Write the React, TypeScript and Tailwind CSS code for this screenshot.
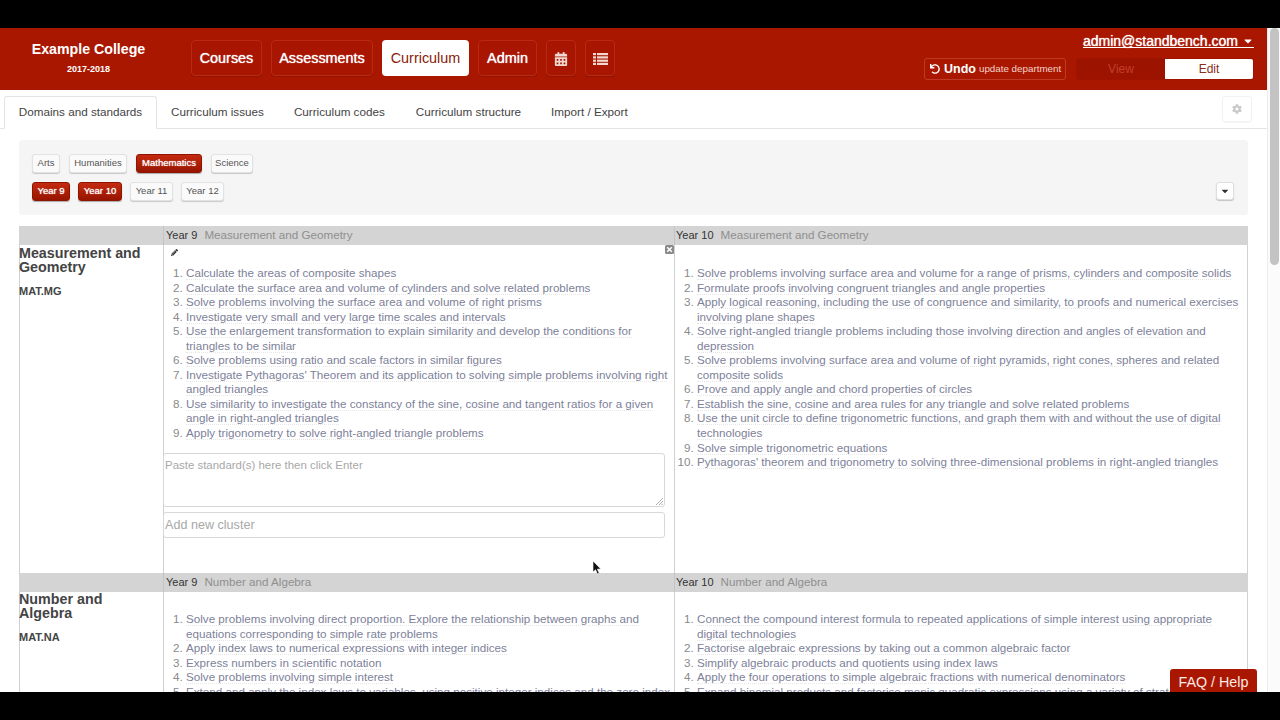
import React from "react";
import { FaCalendarAlt, FaCog, FaUndo, FaPencilAlt, FaCaretDown } from "react-icons/fa";

const y9mg = [
  "Calculate the areas of composite shapes",
  "Calculate the surface area and volume of cylinders and solve related problems",
  "Solve problems involving the surface area and volume of right prisms",
  "Investigate very small and very large time scales and intervals",
  "Use the enlargement transformation to explain similarity and develop the conditions for triangles to be similar",
  "Solve problems using ratio and scale factors in similar figures",
  "Investigate Pythagoras' Theorem and its application to solving simple problems involving right angled triangles",
  "Use similarity to investigate the constancy of the sine, cosine and tangent ratios for a given angle in right-angled triangles",
  "Apply trigonometry to solve right-angled triangle problems",
];
const y10mg = [
  "Solve problems involving surface area and volume for a range of prisms, cylinders and composite solids",
  "Formulate proofs involving congruent triangles and angle properties",
  "Apply logical reasoning, including the use of congruence and similarity, to proofs and numerical exercises involving plane shapes",
  "Solve right-angled triangle problems including those involving direction and angles of elevation and depression",
  "Solve problems involving surface area and volume of right pyramids, right cones, spheres and related composite solids",
  "Prove and apply angle and chord properties of circles",
  "Establish the sine, cosine and area rules for any triangle and solve related problems",
  "Use the unit circle to define trigonometric functions, and graph them with and without the use of digital technologies",
  "Solve simple trigonometric equations",
  "Pythagoras' theorem and trigonometry to solving three-dimensional problems in right-angled triangles",
];
const y9na = [
  "Solve problems involving direct proportion. Explore the relationship between graphs and equations corresponding to simple rate problems",
  "Apply index laws to numerical expressions with integer indices",
  "Express numbers in scientific notation",
  "Solve problems involving simple interest",
  "Extend and apply the index laws to variables, using positive integer indices and the zero index",
];
const y10na = [
  "Connect the compound interest formula to repeated applications of simple interest using appropriate digital technologies",
  "Factorise algebraic expressions by taking out a common algebraic factor",
  "Simplify algebraic products and quotients using index laws",
  "Apply the four operations to simple algebraic fractions with numerical denominators",
  "Expand binomial products and factorise monic quadratic expressions using a variety of strategies",
];

function Std({ items, wide }: { items: string[]; wide?: boolean }) {
  return (
    <ol className={`list-decimal pl-[22px] text-[11.65px] leading-[14.55px] text-[#7d8199] marker:text-[#8a8a8a] ${wide ? "pr-1" : "pr-0"}`}>
      {items.map((t) => (
        <li key={t}>
          <span className="border-b border-dotted border-[#e6e6e6]">{t}</span>
        </li>
      ))}
    </ol>
  );
}

function HeadRow({ label }: { label: string }) {
  return (
    <div className="grid h-[19px] grid-cols-[144px_511px_574px] bg-[#d4d4d4] leading-[18px]">
      <div />
      <div className="border-l border-[#c4c4c4] pl-[2px] text-[11px] text-[#333]">
        Year 9<span className="ml-[7px] text-[11.65px] text-[#8f8f8f]">{label}</span>
      </div>
      <div className="border-l border-[#c4c4c4] pl-[1px] text-[11px] text-[#333]">
        Year 10<span className="ml-[7px] text-[11.65px] text-[#8f8f8f]">{label}</span>
      </div>
    </div>
  );
}

function Chip({ label, w, on }: { label: string; w: string; on?: boolean }) {
  return (
    <span
      className={`flex h-[19px] items-center justify-center rounded-[3px] border text-[9.5px] ${w} ${
        on
          ? "border-[#8f1400] bg-gradient-to-b from-[#c42a10] to-[#971500] text-white shadow-[0_1px_1px_rgba(0,0,0,0.3)] [text-shadow:0_0_1px_#fff]"
          : "border-[#e2e2e2] bg-[#fafafa] text-[#555] shadow-[0_1px_1px_rgba(0,0,0,0.18)]"
      }`}
    >
      {label}
    </span>
  );
}

function NavBtn({ children, w, on }: { children: React.ReactNode; w: string; on?: boolean }) {
  return (
    <div
      className={`flex h-9 items-center justify-center rounded-[4px] pt-[1px] text-[14.4px] ${w} ${
        on
          ? "bg-white text-[#8a1a08]"
          : "border border-[#b92a14] bg-[#a81500] text-white shadow-[0_1px_1px_rgba(0,0,0,0.15)] [text-shadow:0_0_1px_#fff]"
      }`}
    >
      {children}
    </div>
  );
}

export default function App() {
  return (
    <div className="flex h-[720px] w-[1280px] flex-col overflow-hidden bg-black font-['Liberation_Sans',Arial,sans-serif]">
      <div className="h-7 shrink-0" />
      <div className="relative flex min-h-0 flex-1 bg-white">
        <div className="min-w-0 flex-1 overflow-hidden">
          {/* Header */}
          <div className="flex h-[62px] bg-[#aa1700] text-white">
            <div className="w-[177px] shrink-0 pt-[13px] text-center">
              <div className="text-[14.2px] font-bold leading-[17px]">Example College</div>
              <div className="mt-[5px] text-[9px] font-bold leading-[12px]">2017-2018</div>
            </div>
            <div className="ml-[14px] flex gap-[9px] pt-3">
              <NavBtn w="w-[71px]">Courses</NavBtn>
              <NavBtn w="w-[102px]">Assessments</NavBtn>
              <NavBtn w="w-[87px]" on>Curriculum</NavBtn>
              <NavBtn w="w-[59px]">Admin</NavBtn>
              <NavBtn w="w-[30px]"><FaCalendarAlt className="text-[14px] text-[#f0d8d0]" /></NavBtn>
              <NavBtn w="w-[30px]">
                <svg width="15" height="12" viewBox="0 0 15 12" fill="#f0d8d0">
                  <rect x="0" y="0" width="3" height="2.2" />
                  <rect x="4" y="0" width="11" height="2.2" />
                  <rect x="0" y="3.3" width="3" height="2.2" />
                  <rect x="4" y="3.3" width="11" height="2.2" />
                  <rect x="0" y="6.6" width="3" height="2.2" />
                  <rect x="4" y="6.6" width="11" height="2.2" />
                  <rect x="0" y="9.8" width="3" height="2.2" />
                  <rect x="4" y="9.8" width="11" height="2.2" />
                </svg>
              </NavBtn>
            </div>
            <div className="ml-auto flex w-[350px] shrink-0 flex-col items-end pr-[13px]">
              <div className="mt-[6px] flex h-[14px] items-center border-b border-white text-[14px] leading-[14px] [text-shadow:0_0_1px_#fff]">
                admin@standbench.com
                <FaCaretDown className="ml-[4px] text-[12px]" />
              </div>
              <div className="mt-[10px] flex items-center">
                <div className="flex h-[22px] w-[142px] items-center rounded-[3px] border border-[#bf3a24] pl-[5px] leading-none">
                  <FaUndo className="text-[10px]" />
                  <span className="ml-[4px] text-[12.5px] font-bold">Undo</span>
                  <span className="ml-[3px] text-[9.8px] text-[#f2d2ca]">update department</span>
                </div>
                <div className="ml-[10px] flex h-[22px] w-[178px] overflow-hidden rounded-[3px] border border-[#a01300] text-[12px]">
                  <div className="flex w-[89px] items-center justify-center bg-[#9c1300] text-[#c0402c]">View</div>
                  <div className="flex w-[89px] items-center justify-center bg-white text-[#8a3020]">Edit</div>
                </div>
              </div>
            </div>
          </div>

          {/* Tabs */}
          <div className="flex h-[39px] items-end border-b border-[#e4e4e4] pl-1 text-[11.7px] text-[#444]">
            <div className="-mb-px flex h-[33px] w-[153px] items-center justify-center rounded-t-[3px] border border-b-white border-[#e4e4e4] bg-white pb-[1px]">
              Domains and standards
            </div>
            <div className="flex h-[32px] items-center pl-[14px]">Curriculum issues</div>
            <div className="flex h-[32px] items-center pl-[30px]">Curriculum codes</div>
            <div className="flex h-[32px] items-center pl-[31px]">Curriculum structure</div>
            <div className="flex h-[32px] items-center pl-[30px]">Import / Export</div>
            <div className="mb-[6px] ml-auto mr-[15px] flex h-[26px] w-[30px] items-center justify-center self-end rounded-[3px] border border-[#f2f2f2] shadow-[0_1px_1px_rgba(0,0,0,0.04)]">
              <FaCog className="text-[10px] text-[#c9c9c9]" />
            </div>
          </div>

          {/* Content */}
          <div className="px-[19px] pt-[11px]">
            <div className="relative h-[75px] w-[1229px] rounded-[4px] bg-[#f5f5f5] px-[13px] pt-[14px]">
              <div className="flex items-start gap-[9px]">
                <Chip label="Arts" w="w-[28px]" />
                <Chip label="Humanities" w="w-[58px]" />
                <Chip label="Mathematics" w="w-[66px]" on />
                <Chip label="Science" w="w-[42px]" />
              </div>
              <div className="mt-[9px] flex items-start gap-[8px]">
                <Chip label="Year 9" w="w-[38px]" on />
                <Chip label="Year 10" w="w-[44px]" on />
                <Chip label="Year 11" w="w-[43px]" />
                <Chip label="Year 12" w="w-[43px]" />
              </div>
              <div className="absolute right-[14px] top-[42px] flex h-[18px] w-[18px] items-center justify-center rounded-[3px] border border-[#dedede] bg-white text-[#333] shadow-[0_1px_1px_rgba(0,0,0,0.2)]">
                <FaCaretDown className="text-[10px]" />
              </div>
            </div>

            <div className="mt-[11px] w-[1229px]">
              <HeadRow label="Measurement and Geometry" />
              <div className="grid h-[328px] grid-cols-[144px_511px_574px]">
                <div className="border-l border-[#d0d0d0] pr-[20px]">
                  <div className="-ml-px pt-[1px] text-[14.3px] font-bold leading-[14px] text-[#444]">Measurement and Geometry</div>
                  <div className="-ml-px mt-[10px] text-[11px] font-bold leading-[14px] text-[#444]">MAT.MG</div>
                </div>
                <div className="relative border-l border-[#d0d0d0]">
                  <div className="flex h-[21px] items-start pl-[7px] pt-[4px]">
                    <FaPencilAlt className="text-[7px] text-[#333]" />
                  </div>
                  <Std items={y9mg} />
                  <div className="relative mt-[12px] h-[54px] w-[502px] -ml-px rounded-[3px] border border-[#d8d8d8] px-[1px] pt-[4px] text-[11.45px] leading-[14px] text-[#a8a8a8]">
                    Paste standard(s) here then click Enter
                    <svg className="absolute bottom-[1px] right-[1px]" width="8" height="8" viewBox="0 0 8 8" stroke="#999" strokeWidth="0.8">
                      <path d="M1 8 L8 1 M4 8 L8 4 M6.5 8 L8 6.5" />
                    </svg>
                  </div>
                  <div className="mt-[5px] flex h-[26px] w-[502px] -ml-px items-center rounded-[3px] border border-[#d8d8d8] pl-[1px] pt-[1px] text-[12.6px] text-[#a8a8a8]">
                    Add new cluster
                  </div>
                  <svg className="absolute right-0 top-0" width="9" height="9" viewBox="0 0 9 9">
                    <rect x="0" y="0" width="9" height="9" rx="1.5" fill="#8a8a8a" />
                    <path d="M2.2 2.2 L6.8 6.8 M6.8 2.2 L2.2 6.8" stroke="#fff" strokeWidth="1.5" />
                  </svg>
                </div>
                <div className="border-x border-[#d0d0d0]">
                  <div className="h-[21px]" />
                  <Std items={y10mg} wide />
                </div>
              </div>
              <HeadRow label="Number and Algebra" />
              <div className="grid h-[120px] grid-cols-[144px_511px_574px]">
                <div className="border-l border-[#d0d0d0] pr-[20px]">
                  <div className="-ml-px text-[14.3px] font-bold leading-[14px] text-[#444]">Number and Algebra</div>
                  <div className="-ml-px mt-[10px] text-[11px] font-bold leading-[14px] text-[#444]">MAT.NA</div>
                </div>
                <div className="border-l border-[#d0d0d0] pt-[20px]">
                  <Std items={y9na} />
                </div>
                <div className="border-x border-[#d0d0d0] pt-[20px]">
                  <Std items={y10na} wide />
                </div>
              </div>
            </div>
          </div>
        </div>

        {/* Scrollbar */}
        <div className="w-[13px] shrink-0 border-l border-[#ececec] bg-[#fbfbfb] pl-[2px] pr-[1px]">
          <div className="h-[237px] rounded-[5px] bg-[#c3c3c3]" />
        </div>

        {/* FAQ */}
        <div className="absolute bottom-0 left-[1170px] flex h-[23px] w-[87px] items-center justify-center rounded-t-[3px] bg-[#aa1700] pt-[5px] text-[14.3px] text-[#fbeae6]">
          FAQ / Help
        </div>

        {/* Cursor */}
        <svg className="absolute left-[592px] top-[532px]" width="10" height="16" viewBox="0 0 10 16">
          <path d="M1 1 L1 12 L3.6 9.8 L5.4 14 L7.2 13.2 L5.4 9.2 L8.8 9 Z" fill="#111" stroke="#fff" strokeWidth="0.6" />
        </svg>
      </div>
      <div className="h-7 shrink-0" />
    </div>
  );
}
